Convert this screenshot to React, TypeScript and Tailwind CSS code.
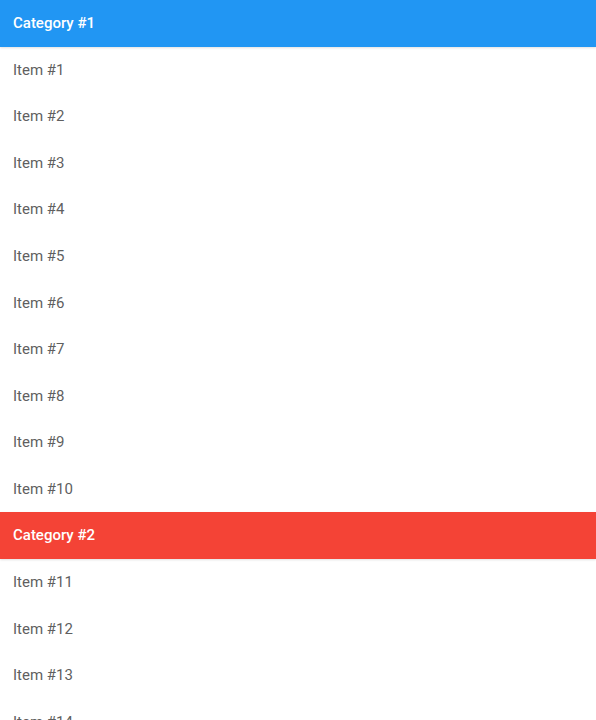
import React from 'react';

type Category = { title: string; color: string; items: string[] };

const CATEGORIES: Category[] = [
  {
    title: 'Category #1',
    color: 'bg-[#2196f3]',
    items: Array.from({ length: 10 }, (_, i) => `Item #${i + 1}`),
  },
  {
    title: 'Category #2',
    color: 'bg-[#f44336]',
    items: Array.from({ length: 10 }, (_, i) => `Item #${i + 11}`),
  },
];

const App: React.FC = () => {
  return (
    <div className="min-h-screen bg-white font-['Roboto',sans-serif]">
      {CATEGORIES.map((cat) => (
        <section key={cat.title}>
          {/* section header */}
          <div
            className={`${cat.color} h-[46.5px] flex items-center px-[13px] text-white text-[15px] font-medium shadow-[0_1px_2px_rgba(0,0,0,0.12)] relative`}
          >
            {cat.title}
          </div>
          <ul>
            {cat.items.map((item) => (
              <li key={item} className="h-[46.6px] flex items-center px-[13px] text-[15px] text-[#5f5f5f]">
                {item}
              </li>
            ))}
          </ul>
        </section>
      ))}
    </div>
  );
};

export default App;
